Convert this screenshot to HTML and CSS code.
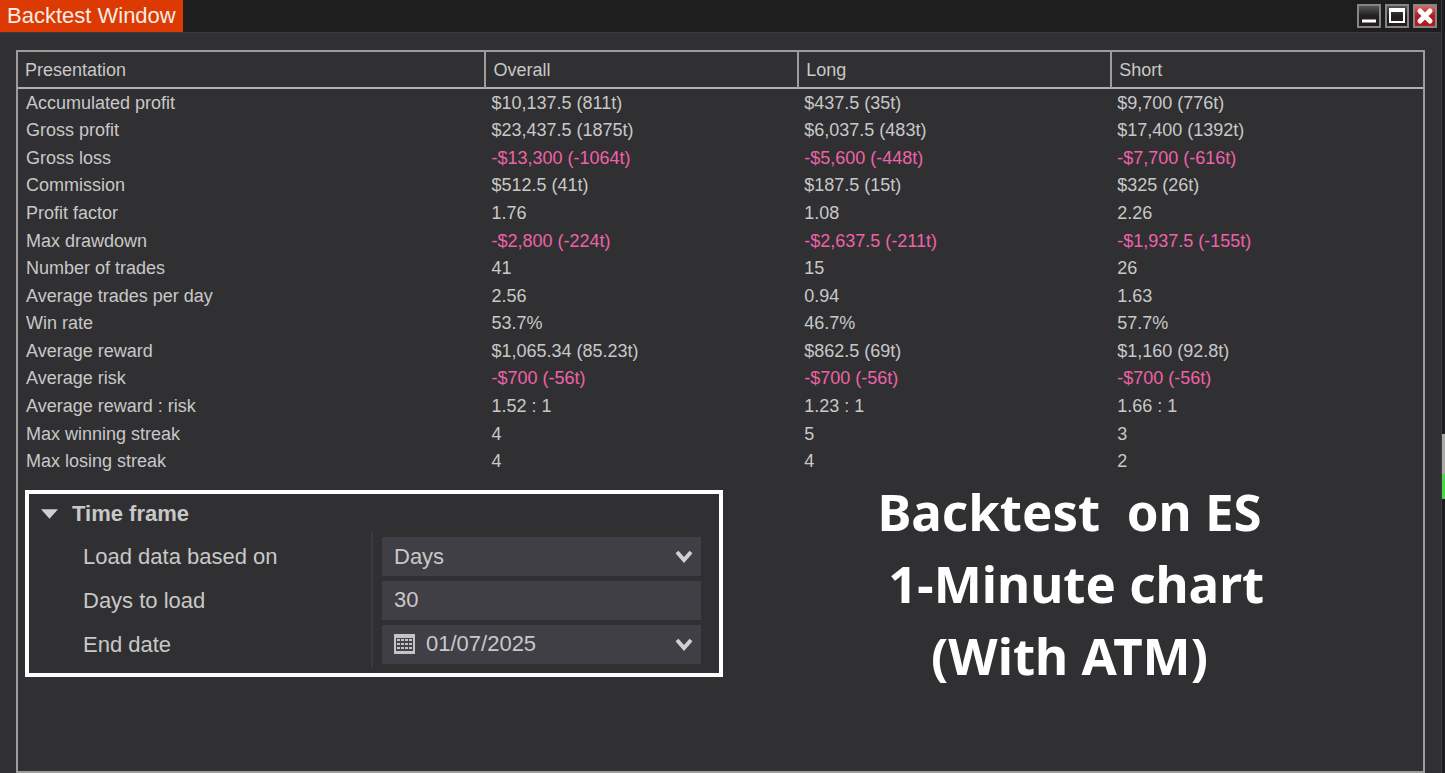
FILE: index.html
```html
<!DOCTYPE html>
<html lang="en">
<head>
  <meta charset="UTF-8">
  <meta name="viewport" content="width=device-width, initial-scale=1.0">
  <title>Backtest Window</title>
  <link rel="stylesheet" href="styles.css">
</head>
<body>
  <div class="window">
    <header class="title-bar">
      <h1>Backtest Window</h1>
      <div class="window-buttons">
        <button type="button" aria-label="Minimize">
          <svg viewBox="0 0 20 20"><path d="M3 15h14" stroke="#fff" stroke-width="3"/></svg>
        </button>
        <button type="button" aria-label="Maximize">
          <svg viewBox="0 0 20 20"><path d="M2 2h16v15H2zM4 6v9h12V6z" fill="#fff" fill-rule="evenodd"/></svg>
        </button>
        <button type="button" class="close" aria-label="Close">
          <svg viewBox="0 0 20 20"><path d="M5 5l10 10M15 5L5 15" stroke="#fff" stroke-width="5" stroke-linecap="round"/></svg>
        </button>
      </div>
    </header>

    <main class="frame">
      <table class="results">
        <thead>
          <tr><th>Presentation</th><th>Overall</th><th>Long</th><th>Short</th></tr>
        </thead>
        <tbody>
          <tr><td>Accumulated profit</td><td>$10,137.5 (811t)</td><td>$437.5 (35t)</td><td>$9,700 (776t)</td></tr>
          <tr><td>Gross profit</td><td>$23,437.5 (1875t)</td><td>$6,037.5 (483t)</td><td>$17,400 (1392t)</td></tr>
          <tr class="loss"><td>Gross loss</td><td>-$13,300 (-1064t)</td><td>-$5,600 (-448t)</td><td>-$7,700 (-616t)</td></tr>
          <tr><td>Commission</td><td>$512.5 (41t)</td><td>$187.5 (15t)</td><td>$325 (26t)</td></tr>
          <tr><td>Profit factor</td><td>1.76</td><td>1.08</td><td>2.26</td></tr>
          <tr class="loss"><td>Max drawdown</td><td>-$2,800 (-224t)</td><td>-$2,637.5 (-211t)</td><td>-$1,937.5 (-155t)</td></tr>
          <tr><td>Number of trades</td><td>41</td><td>15</td><td>26</td></tr>
          <tr><td>Average trades per day</td><td>2.56</td><td>0.94</td><td>1.63</td></tr>
          <tr><td>Win rate</td><td>53.7%</td><td>46.7%</td><td>57.7%</td></tr>
          <tr><td>Average reward</td><td>$1,065.34 (85.23t)</td><td>$862.5 (69t)</td><td>$1,160 (92.8t)</td></tr>
          <tr class="loss"><td>Average risk</td><td>-$700 (-56t)</td><td>-$700 (-56t)</td><td>-$700 (-56t)</td></tr>
          <tr><td>Average reward : risk</td><td>1.52 : 1</td><td>1.23 : 1</td><td>1.66 : 1</td></tr>
          <tr><td>Max winning streak</td><td>4</td><td>5</td><td>3</td></tr>
          <tr><td>Max losing streak</td><td>4</td><td>4</td><td>2</td></tr>
        </tbody>
      </table>

      <div class="lower">
        <section class="settings">
          <h2>
            <svg class="arrow" viewBox="0 0 18 10"><path d="M0 0h18L9 10z" fill="#d0d0d0"/></svg>
            Time frame
          </h2>
          <form class="fields">
            <div class="labels">
              <label for="basis">Load data based on</label>
              <label for="days">Days to load</label>
              <label for="end">End date</label>
            </div>
            <div class="controls">
              <div class="control">
                <select id="basis"><option>Days</option></select>
                <svg class="chevron" viewBox="0 0 18 14"><path d="M2 3l7 8 7-8" fill="none" stroke="#d0d0d0" stroke-width="4"/></svg>
              </div>
              <div class="control">
                <input type="text" id="days" value="30">
              </div>
              <div class="control">
                <svg class="calendar" viewBox="0 0 21 20">
                  <rect width="21" height="20" fill="#c4c4c4"/>
                  <rect x="2" y="4" width="17" height="13" fill="#45444c"/>
                  <path d="M3 6h15M3 10h15M3 14h15" stroke="#c4c4c4" stroke-width="2" stroke-dasharray="3 1"/>
                </svg>
                <input type="text" id="end" value="01/07/2025">
                <svg class="chevron" viewBox="0 0 18 14"><path d="M2 3l7 8 7-8" fill="none" stroke="#d0d0d0" stroke-width="4"/></svg>
              </div>
            </div>
          </form>
        </section>

        <p class="caption">Backtest&nbsp; on ES<br>&nbsp;1-Minute chart<br>(With ATM)</p>
      </div>
    </main>
  </div>

  <!-- sliver of the chart behind the window -->
  <div class="chart-edge">
    <div class="candle"></div>
  </div>
</body>
</html>
```
FILE: styles.css
```css
* {
  box-sizing: border-box;
}

body {
  margin: 0;
  display: flex;
  min-height: 100vh;
  background: #303032;
  color: #c8c8c8;
  font-family: "Liberation Sans", Arial, sans-serif;
}

.window {
  flex: 1;
  display: flex;
  flex-direction: column;
}

.title-bar {
  display: flex;
  justify-content: space-between;
  align-items: center;
  height: 33px;
  background: #1e1e1e;
  border-bottom: 1px solid #3a3a3c;
}

.title-bar h1 {
  margin: 0;
  padding: 0 7px;
  background: #dc3a02;
  color: #f6ebe6;
  font-size: 22px;
  font-weight: normal;
  line-height: 32px;
}

.window-buttons {
  display: flex;
  gap: 4px;
  padding-right: 4px;
}

.window-buttons button {
  width: 24px;
  height: 24px;
  padding: 0;
  border: 2px solid #858585;
  background: linear-gradient(#555, #231f20 50%);
}

.window-buttons .close {
  background: linear-gradient(#d66, #b01c22 50%);
}

.window-buttons svg {
  display: block;
}

.frame {
  flex: 1;
  margin: 17px 16px 0;
  border: 2px solid #9c9c9c;
}

.results {
  width: 100%;
  height: 423px;
  table-layout: fixed;
  border-collapse: separate;
  border-spacing: 0;
  font-size: 18px;
  line-height: 20px;
  text-align: left;
}

.results th {
  height: 37px;
  padding: 0 7px;
  border-bottom: 2px solid #b0b0b0;
  font-weight: normal;
}

.results th:first-child {
  width: 33.2%;
}

.results th + th {
  border-left: 2px solid #9c9c9c;
}

.results td {
  padding: 0 7px;
}

.results td:first-child {
  padding-left: 8px;
}

.loss td + td {
  color: #ee62a8;
}

.lower {
  display: flex;
  align-items: center;
  padding: 0 7px;
}

.settings {
  flex: 0 1 698px;
  padding: 8px 18px 6px 12px;
  border: 4px solid #fff;
}

.settings h2 {
  display: flex;
  align-items: center;
  gap: 14px;
  margin: 0 0 6px;
  font-size: 22px;
  line-height: 24px;
}

.arrow {
  width: 17px;
  height: 10px;
}

.fields {
  display: flex;
  font-size: 22px;
}

.labels {
  flex: 1;
  display: grid;
  grid-auto-rows: 44px;
  align-items: center;
  padding: 3px 0 0 42px;
  border-right: 2px solid #3c3c3f;
}

.controls {
  width: 328px;
  display: grid;
  grid-template-columns: minmax(0, 1fr);
  gap: 5px;
  padding: 5px 0 3px 9px;
}

.control {
  display: flex;
  align-items: center;
  height: 39px;
  padding: 0 8px 0 12px;
  background: #403f45;
}

.control select,
.control input {
  flex: 1;
  min-width: 0;
  height: 100%;
  padding: 0;
  border: 0;
  outline: 0;
  background: none;
  color: inherit;
  font: inherit;
  appearance: none;
}

.chevron {
  width: 18px;
  height: 14px;
}

.calendar {
  width: 21px;
  height: 20px;
  margin-right: 11px;
}

.caption {
  flex: 1;
  margin: 0;
  color: #fff;
  font-family: "Noto Sans", sans-serif;
  font-size: 51px;
  font-weight: bold;
  line-height: 72px;
  text-align: center;
}

.chart-edge {
  width: 4px;
  padding-top: 434px;
  background: #1c1b1d;
  border-left: 1px solid #3a3a3e;
}

.candle {
  height: 65px;
  background: linear-gradient(#aaa 40px, #4fd44f 40px);
}
```
